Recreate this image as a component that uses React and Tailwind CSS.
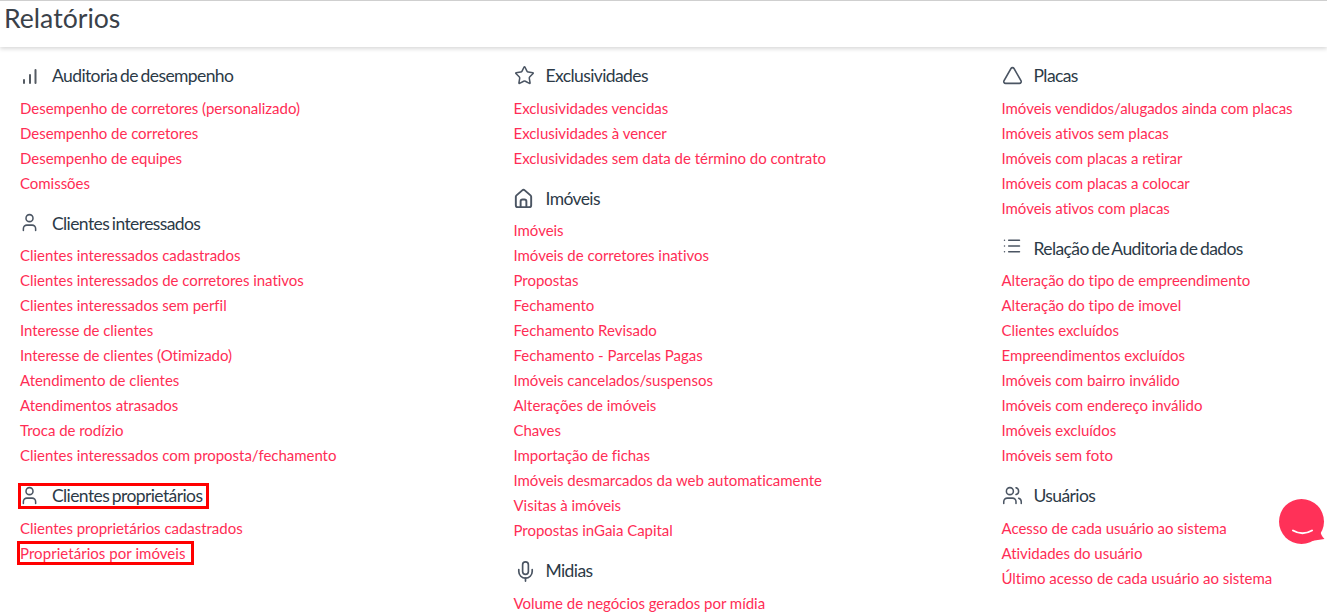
import { List, Mic, Star, Triangle, User, Users } from "lucide-react";

function Bars() {
  return (
    <svg width="20" height="20" viewBox="0 0 20 20" fill="none" stroke="#555b63" strokeWidth="2" strokeLinecap="round">
      <path d="M4 17v-3M10 17V9M15.5 17V4" />
    </svg>
  );
}

function Estate() {
  return (
    <svg width="23" height="23" viewBox="0 0 24 24" fill="#4b5563" className="-ml-0.5">
      <path d="M20 8h0L14 2.74a3 3 0 0 0-4 0L4 8a3 3 0 0 0-1 2.26V19a3 3 0 0 0 3 3H18a3 3 0 0 0 3-3V10.25A3 3 0 0 0 20 8ZM14 20H10V15a1 1 0 0 1 1-1h2a1 1 0 0 1 1 1Zm5-1a1 1 0 0 1-1 1H16V15a3 3 0 0 0-3-3H11a3 3 0 0 0-3 3v5H6a1 1 0 0 1-1-1V10.25a1 1 0 0 1 .34-.75l6-5.25a1 1 0 0 1 1.32 0l6 5.25a1 1 0 0 1 .34.75Z" />
    </svg>
  );
}

const iconClass = "text-[#4b5563]";

const columns = [
  [
    {
      title: "Auditoria de desempenho",
      icon: <Bars />,
      links: [
        "Desempenho de corretores (personalizado)",
        "Desempenho de corretores",
        "Desempenho de equipes",
        "Comissões",
      ],
    },
    {
      title: "Clientes interessados",
      icon: <User size={21} strokeWidth={1.75} className={`${iconClass} -ml-px -translate-y-px`} />,
      links: [
        "Clientes interessados cadastrados",
        "Clientes interessados de corretores inativos",
        "Clientes interessados sem perfil",
        "Interesse de clientes",
        "Interesse de clientes (Otimizado)",
        "Atendimento de clientes",
        "Atendimentos atrasados",
        "Troca de rodízio",
        "Clientes interessados com proposta/fechamento",
      ],
    },
    {
      title: "Clientes proprietários",
      icon: <User size={21} strokeWidth={1.75} className={`${iconClass} -ml-px -translate-y-px`} />,
      marked: true,
      links: ["Clientes proprietários cadastrados", "Proprietários por imóveis"],
      markedLink: "Proprietários por imóveis",
    },
  ],
  [
    {
      title: "Exclusividades",
      icon: <Star size={21} strokeWidth={1.75} className={`${iconClass} -translate-y-px`} />,
      links: [
        "Exclusividades vencidas",
        "Exclusividades à vencer",
        "Exclusividades sem data de término do contrato",
      ],
    },
    {
      title: "Imóveis",
      icon: <Estate />,
      links: [
        "Imóveis",
        "Imóveis de corretores inativos",
        "Propostas",
        "Fechamento",
        "Fechamento Revisado",
        "Fechamento - Parcelas Pagas",
        "Imóveis cancelados/suspensos",
        "Alterações de imóveis",
        "Chaves",
        "Importação de fichas",
        "Imóveis desmarcados da web automaticamente",
        "Visitas à imóveis",
        "Propostas inGaia Capital",
      ],
    },
    {
      title: "Midias",
      icon: <Mic size={23} strokeWidth={1.75} className={iconClass} />,
      links: ["Volume de negócios gerados por mídia"],
    },
  ],
  [
    {
      title: "Placas",
      icon: <Triangle size={21} strokeWidth={1.75} className={`${iconClass} -translate-y-px`} />,
      links: [
        "Imóveis vendidos/alugados ainda com placas",
        "Imóveis ativos sem placas",
        "Imóveis com placas a retirar",
        "Imóveis com placas a colocar",
        "Imóveis ativos com placas",
      ],
    },
    {
      title: "Relação de Auditoria de dados",
      icon: <List size={20} strokeWidth={1.75} className={`${iconClass} -translate-y-[3px]`} />,
      links: [
        "Alteração do tipo de empreendimento",
        "Alteração do tipo de imovel",
        "Clientes excluídos",
        "Empreendimentos excluídos",
        "Imóveis com bairro inválido",
        "Imóveis com endereço inválido",
        "Imóveis excluídos",
        "Imóveis sem foto",
      ],
    },
    {
      title: "Usuários",
      icon: <Users size={21} strokeWidth={1.75} className={`${iconClass} -translate-y-px`} />,
      links: [
        "Acesso de cada usuário ao sistema",
        "Atividades do usuário",
        "Último acesso de cada usuário ao sistema",
      ],
    },
  ],
];

function Section({ section }) {
  return (
    <section className="mb-[7px]">
      <div className="h-[40.5px] pt-[2px] flex items-center">
        <h3
          className={`flex items-center h-[26px] -ml-0.5 pl-0.5 pr-1 text-[17.5px] font-normal tracking-[-0.6px] [word-spacing:-1.2px] text-[#2c3a47] ${
            section.marked ? "outline-[3px] -outline-offset-[3px] outline-[#ff0000] w-[191px]" : ""
          }`}
        >
          <span className="w-8 shrink-0 flex">{section.icon}</span>
          {section.title}
        </h3>
      </div>
      <ul>
        {section.links.map((link) => (
          <li key={link} className="h-[25px] flex items-center">
            <a
              href="#"
              className={`text-[15px] leading-[25px] tracking-[-0.03px] text-[#ff2d55] ${
                link === section.markedLink
                  ? "-ml-[3px] pl-[3px] w-[177px] h-[24px] leading-[23px] tracking-[0.05px] outline-[3px] -outline-offset-[3px] outline-[#ff0000]"
                  : ""
              }`}
            >
              {link}
            </a>
          </li>
        ))}
      </ul>
    </section>
  );
}

export default function App() {
  return (
    <div className="relative h-[616px] overflow-hidden bg-white font-['Lato',sans-serif]">
      <header className="h-[47px] border-t border-[#cfcfcf] pl-1 shadow-[0_2px_4px_rgba(0,0,0,0.15)]">
        <h1 className="text-[26.6px] leading-[34px] text-[#3a4149]">Relatórios</h1>
      </header>

      <main className="grid grid-cols-[493.5px_488px_1fr] pl-5 pt-2">
        {columns.map((column, i) => (
          <div key={i}>
            {column.map((section) => (
              <Section key={section.title} section={section} />
            ))}
          </div>
        ))}
      </main>

      {/* chat bubble */}
      <svg className="absolute left-[1279px] top-[498px]" width="46" height="47" viewBox="0 0 46 47">
        <circle cx="22.5" cy="23.5" r="22.5" fill="#ff3158" />
        <path d="M32 43L45.5 41Q42 38 41 32z" fill="#ff3158" />
        <path d="M14 32.5Q23.5 38 33 32.5" fill="none" stroke="#fff" strokeWidth="2" strokeLinecap="round" />
      </svg>
    </div>
  );
}
